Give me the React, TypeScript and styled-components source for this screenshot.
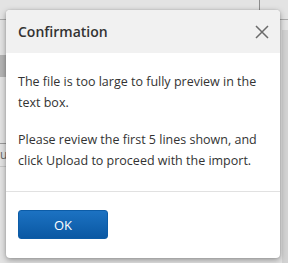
import styled, { createGlobalStyle } from 'styled-components';

const GlobalStyle = createGlobalStyle`
  html, body {
    margin: 0;
    padding: 0;
    width: 288px;
    height: 263px;
    overflow: hidden;
    background: #e3e3e3;
    font-family: 'Open Sans', 'Noto Sans', sans-serif;
  }
`;

const App = () => {
  return (
    <>
      <GlobalStyle />
      <PageWrapper>
        <TopBar>
          <TopBarSpacer />
          <TopBarDivider />
        </TopBar>
        <PageBody>
          <SideColumn>
            <SideBlock />
            <SideInput>u</SideInput>
          </SideColumn>
        </PageBody>
        <RightEdge />
      </PageWrapper>

      <Overlay>
        <Dialog role="dialog" aria-labelledby="dialog-title">
          <DialogHeader>
            <DialogTitle id="dialog-title">Confirmation</DialogTitle>
            <CloseButton aria-label="Close">
              <svg width="14" height="14" viewBox="0 0 14 14">
                <path d="M1 1 L13 13 M13 1 L1 13" stroke="#6b6b6b" strokeWidth="1.5" fill="none" />
              </svg>
            </CloseButton>
          </DialogHeader>
          <DialogBody>
            <p>The file is too large to fully preview in the text box.</p>
            <p>Please review the first 5 lines shown, and click Upload to proceed with the import.</p>
          </DialogBody>
          <DialogFooter>
            <PrimaryButton>OK</PrimaryButton>
          </DialogFooter>
        </Dialog>
      </Overlay>
    </>
  );
};

const PageWrapper = styled.div`
  position: relative;
  width: 288px;
  height: 263px;
  display: flex;
  flex-direction: column;
  background: #e3e3e3;
`;

const TopBar = styled.div`
  display: flex;
  height: 19px;
  border-bottom: 1px solid #a9a9a9;
`;

const TopBarSpacer = styled.div`
  width: 259px;
`;

const TopBarDivider = styled.div`
  width: 1px;
  height: 10px;
  background: #8c8c8c;
`;

const PageBody = styled.div`
  flex: 1;
  display: flex;
`;

const SideColumn = styled.div`
  display: flex;
  flex-direction: column;
  width: 60px;
  padding-top: 35px;
  gap: 66px;
`;

const SideBlock = styled.div`
  height: 22px;
  background: #b4b4b4;
`;

const SideInput = styled.div`
  height: 22px;
  border-top: 1px solid #9a9a9a;
  border-bottom: 1px solid #c8c8c8;
  font-size: 12px;
  line-height: 22px;
  color: #666;
`;

const RightEdge = styled.div`
  position: absolute;
  right: 0;
  top: 30px;
  bottom: 0;
  width: 6px;
  background: #d2d2d2;
`;

const Overlay = styled.div`
  position: absolute;
  inset: 0;
  padding: 10px 8px 5px 6px;
  box-sizing: border-box;
`;

const Dialog = styled.div`
  width: 274px;
  height: 248px;
  display: flex;
  flex-direction: column;
  background: #fff;
  border-radius: 4px;
  overflow: hidden;
  box-shadow: 0 2px 6px rgba(0, 0, 0, 0.35), 0 0 2px rgba(0, 0, 0, 0.15);
`;

const DialogHeader = styled.div`
  display: flex;
  align-items: center;
  justify-content: space-between;
  height: 43px;
  padding: 0 11px 0 12px;
  background: #f1f1f1;
  flex-shrink: 0;
`;

const DialogTitle = styled.h2`
  margin: 0;
  font-size: 14px;
  font-weight: 600;
  color: #333;
`;

const CloseButton = styled.button`
  display: flex;
  align-items: center;
  justify-content: center;
  padding: 0;
  border: none;
  background: none;
  cursor: pointer;
`;

const DialogBody = styled.div`
  padding: 18px 12px 20px 12px;
  border-bottom: 1px solid #e1e1e1;

  p {
    margin: 0;
    font-size: 12.5px;
    line-height: 21px;
    color: #333;
  }

  p + p {
    margin-top: 16px;
  }
`;

const DialogFooter = styled.div`
  display: flex;
  padding: 18px 12px;
`;

const PrimaryButton = styled.button`
  width: 90px;
  height: 29px;
  border: 1px solid #0c5ca7;
  border-radius: 3px;
  background: linear-gradient(to bottom, #1c72c2, #0a58a3);
  color: #fff;
  font-family: 'Open Sans', 'Noto Sans', sans-serif;
  font-size: 13px;
  cursor: pointer;
`;

export default App;
